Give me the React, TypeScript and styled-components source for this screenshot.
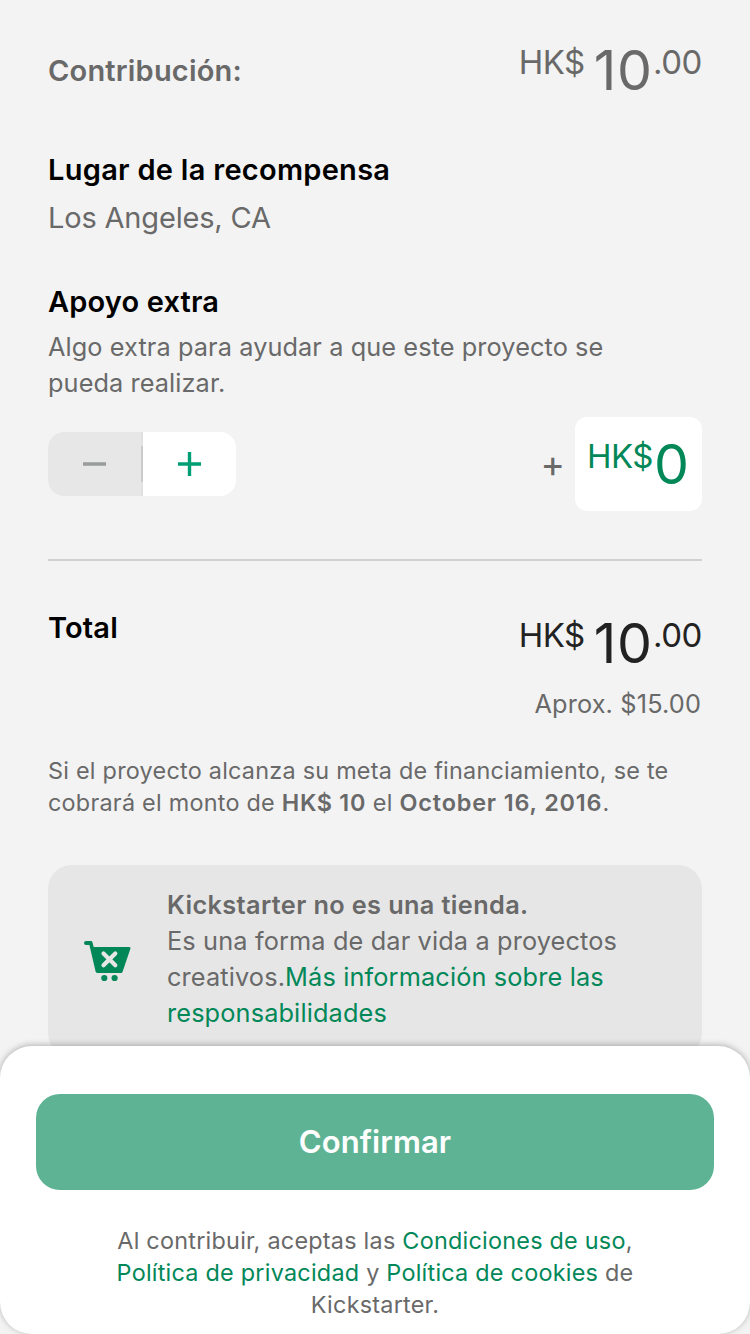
import React from 'react';
import styled, { createGlobalStyle } from 'styled-components';

const GlobalStyle = createGlobalStyle`
  * { box-sizing: border-box; }
  body { margin: 0; background: #f3f3f3; font-family: Inter, "Liberation Sans", sans-serif; }
`;

const Screen = styled.div`
  width: 750px;
  height: 1334px;
  display: flex;
  flex-direction: column;
  overflow: hidden;
  background: #f3f3f3;
  color: #696969;
`;

const Content = styled.main`
  height: 1046px;
  flex: none;
  padding: 45px 48px 0;
  overflow: hidden;
`;

const Row = styled.div<{ $height: number; $top?: number }>`
  display: flex;
  justify-content: space-between;
  height: ${p => p.$height}px;
  margin-top: ${p => p.$top ?? 0}px;
`;

const Line = styled.div<{ $size: number; $height: number; $weight?: number; $color?: string; $spacing?: number; $top?: number }>`
  font-size: ${p => p.$size}px;
  line-height: ${p => p.$height}px;
  font-weight: ${p => p.$weight ?? 400};
  color: ${p => p.$color ?? '#696969'};
  letter-spacing: ${p => p.$spacing ?? 0}px;
  margin-top: ${p => p.$top ?? 0}px;
  white-space: nowrap;
`;

const Approximation = styled(Line)`
  padding-right: 1px;
  text-align: right;
`;

const Money = styled.div<{ $color: string; $top?: number }>`
  display: flex;
  align-items: flex-start;
  color: ${p => p.$color};
  margin-top: ${p => p.$top ?? 0}px;
  white-space: nowrap;
`;

const Small = styled.span`
  font-size: 33px;
  line-height: 35px;
  letter-spacing: -0.5px;
`;

const Cents = styled(Small)`
  letter-spacing: -0.4px;
`;

const Big = styled.span<{ $left: number }>`
  margin-left: ${p => p.$left}px;
  font-size: 55.5px;
  line-height: 49px;
  letter-spacing: 0.8px;
`;

const Stepper = styled.div`
  display: flex;
  align-items: stretch;
  width: 188px;
  height: 64px;
  margin-top: 15px;
  border-radius: 16px;
  overflow: hidden;
  background: #fff;
`;

const StepButton = styled.button<{ $disabled?: boolean }>`
  flex: 1;
  display: grid;
  place-items: center;
  padding: 0;
  border: 0;
  background: ${p => (p.$disabled ? '#e7e7e7' : '#fff')};
`;

const StepSeparator = styled.span`
  width: 2px;
  border: solid #e1e1e1;
  border-width: 14px 0;
  background: #cbcbcb;
`;

const Divider = styled.hr`
  height: 2px;
  margin: 48px 0 0;
  border: 0;
  background: #d1d1d1;
`;

const Amount = styled.div`
  display: flex;
  align-items: flex-start;
`;

const AmountBox = styled.div`
  width: 127px;
  height: 94px;
  padding: 22px 0 0 12px;
  margin-left: 10px;
  border-radius: 12px;
  background: #fff;
`;

const Notice = styled.section`
  display: flex;
  height: 192px;
  margin-top: 46px;
  padding: 22px 35px;
  border-radius: 24px;
  background: #e6e6e6;
`;

const CartIcon = styled.svg`
  flex: none;
  margin: 53px 36px 0 0;
`;

const Link = styled.span`
  color: #028858;
`;

const Strong = styled.b<{ $spacing?: number }>`
  font-weight: 600;
  letter-spacing: ${p => p.$spacing ?? 0}px;
`;

const Footer = styled.footer`
  flex: 1;
  padding: 48px 36px 0;
  border-radius: 32px;
  background: #fff;
  box-shadow: 0 -1px 6px rgba(0, 0, 0, 0.28);
  text-align: center;
  position: relative;
`;

const Confirm = styled.button`
  display: block;
  width: 100%;
  height: 96px;
  margin-bottom: 35px;
  padding: 0 0 2px;
  border: 0;
  border-radius: 24px;
  background: #5fb395;
  color: #fff;
  font: 600 31px Inter, sans-serif;
  letter-spacing: 0.1px;
`;

export default function App() {
  return (
    <>
      <GlobalStyle />
      <Screen>
        <Content>
          <Row $height={105}>
            <Line $size={29} $height={51} $weight={600} $spacing={0.2}>Contribución:</Line>
            <Money $color="#696969">
              <Small>HK$</Small><Big $left={9}>10</Big><Cents>.00</Cents>
            </Money>
          </Row>
          <Line $size={29} $height={39} $weight={600} $color="#000" $spacing={0.28}>Lugar de la recompensa</Line>
          <Line $size={29} $height={40} $top={9} $spacing={-0.18}>Los Angeles, CA</Line>
          <Line $size={29} $height={39} $top={44} $weight={600} $color="#000" $spacing={0.15}>Apoyo extra</Line>
          <Line $size={25.3} $height={36} $top={8} $spacing={0.09}>Algo extra para ayudar a que este proyecto se<br />pueda realizar.</Line>
          <Row $height={94} $top={16}>
            <Stepper>
              <StepButton $disabled>
                <svg width="23" height="24" viewBox="0 0 23 24" stroke="#989c9a" strokeWidth="3.4"><path d="M0 12h23" /></svg>
              </StepButton>
              <StepSeparator />
              <StepButton>
                <svg width="23" height="24" viewBox="0 0 23 24" stroke="#009e74" strokeWidth="3.4"><path d="M0 12h23M11.5 0v24" /></svg>
              </StepButton>
            </Stepper>
            <Amount>
              <Line $size={37} $height={93}>+</Line>
              <AmountBox>
                <Money $color="#028858"><Small>HK$</Small><Big $left={1}>0</Big></Money>
              </AmountBox>
            </Amount>
          </Row>
          <Divider />
          <Row $height={125}>
            <Line $size={29} $height={40} $top={47} $weight={600} $color="#000" $spacing={0.15}>Total</Line>
            <Money $color="#222" $top={57}><Small>HK$</Small><Big $left={9}>10</Big><Cents>.00</Cents></Money>
          </Row>
          <Approximation $size={25.3} $height={36} $spacing={0.15}>Aprox. $15.00</Approximation>
          <Line $size={23.4} $height={32} $top={33} $spacing={0.24}>Si el proyecto alcanza su meta de financiamiento, se te<br />cobrará el monto de <Strong $spacing={0.7}>HK$ 10</Strong> el <Strong $spacing={0.85}>October 16, 2016</Strong>.</Line>
          <Notice>
            <CartIcon width="48" height="42" viewBox="0 0 48 42">
              <path fill="#028858" d="M3 1h4.6c1 0 1.6.5 1.9 1.4L10.7 7h35.5c1 0 1.6.8 1.2 1.8l-7.8 22.9c-.3.9-.9 1.3-1.8 1.3H14.4c-1 0-1.6-.5-1.8-1.4L6.4 5H3a2 2 0 0 1 0-4z" />
              <path stroke="#e6e6e6" strokeWidth="4.2" strokeLinecap="round" d="M20.5 13.5l11.8 11.8M32.3 13.5L20.5 25.3" />
              <circle cx="21.3" cy="38" r="3.1" fill="#028858" />
              <circle cx="31.6" cy="38" r="3.1" fill="#028858" />
            </CartIcon>
            <Line $size={25.3} $height={36} $spacing={0.14}><Strong $spacing={0.38}>Kickstarter no es una tienda.</Strong><br />Es una forma de dar vida a proyectos<br />creativos.<Link>Más información sobre las<br />responsabilidades</Link></Line>
          </Notice>
        </Content>
        <Footer>
          <Confirm>Confirmar</Confirm>
          <Line $size={23.4} $height={32} $spacing={0.24}>Al contribuir, aceptas las <Link>Condiciones de uso</Link>,<br /><Link>Política de privacidad</Link> y <Link>Política de cookies</Link> de<br />Kickstarter.</Line>
        </Footer>
      </Screen>
    </>
  );
}
